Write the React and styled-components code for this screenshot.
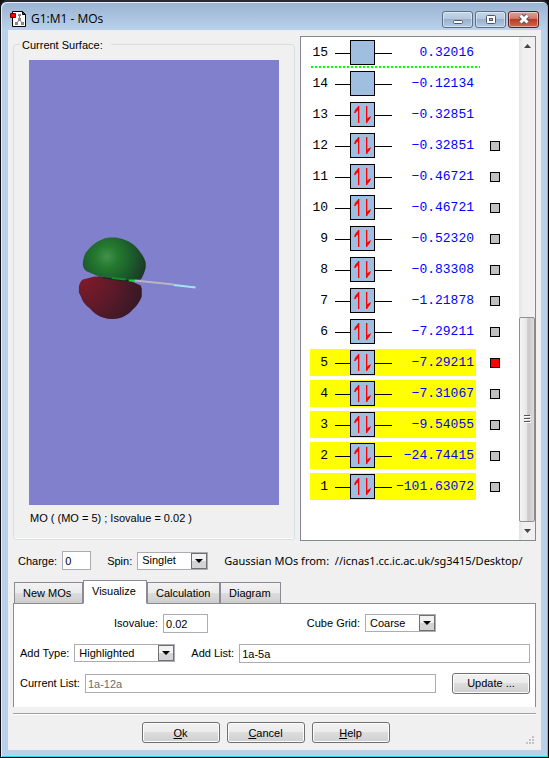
import React, { useState } from 'react'
import styled, { createGlobalStyle } from 'styled-components'

const GlobalStyle = createGlobalStyle`
  * {
    box-sizing: border-box;
  }

  body {
    margin: 0;
    background-color: #101014;
    color: #000;
    font-family: 'Liberation Sans', Arial, sans-serif;
    font-size: 11px;
    line-height: 14px;
  }

  input,
  select,
  button {
    margin: 0;
    font: inherit;
    color: inherit;
  }
`

const Frame = styled.div`
  display: flex;
  flex-direction: column;
  min-height: 100vh;
  padding: 0 6px 7px;
  border: solid;
  border-width: 2px 1px 1px;
  border-color: #2a2a32 #000 #000 #101014;
  border-radius: 7px 7px 0 0;
  background: linear-gradient(#9ab3d1, #b9d1ea 28px);
  box-shadow: inset 1px 1px 0 #e4eefa, inset -1px -1px 0 #2cd8ec;
`

const TitleBar = styled.header`
  display: flex;
  align-items: center;
  height: 28px;
  padding: 6px 3px 0;
  gap: 5px;
`

const Title = styled.h1`
  flex: 1;
  margin: 0;
  font-family: 'Open Sans', 'Noto Sans', sans-serif;
  font-size: 12px;
  font-weight: 400;
  line-height: 16px;
`

const WindowButtons = styled.div`
  display: flex;
  gap: 2px;
`

const WindowButton = styled.button`
  display: flex;
  align-items: center;
  justify-content: center;
  width: 31px;
  height: 17px;
  padding: 0;
  border: 1px solid ${p => (p.$close ? '#5a1f22' : '#5c6f86')};
  border-radius: 3px;
  background: ${p =>
    p.$close
      ? 'linear-gradient(#dfa397, #cf7766 45%, #b83a27 50%, #cf6a50)'
      : 'linear-gradient(#c5d6e8, #b4c8df 45%, #98b1cd 50%, #b2cae3)'};
  box-shadow: inset 0 0 0 1px rgba(255, 255, 255, 0.45);
`

const Client = styled.main`
  display: flex;
  flex: 1;
  flex-direction: column;
  margin: 0 1px;
  padding: 6px 5px;
  background-color: #f0f0f0;
`

const Top = styled.div`
  display: grid;
  flex: 1;
  grid-template-columns: minmax(0, 282fr) minmax(0, 236fr);
  gap: 5px;
`

const SurfaceBox = styled.fieldset`
  display: flex;
  flex-direction: column;
  min-width: 0;
  margin: 0 0 1px;
  padding: 8px 15px 14px;
  border: 1px solid #d5dfe5;
  border-radius: 3px;
  box-shadow: inset 0 -1px 0 #fff;
`

const Legend = styled.legend`
  margin-left: -9px;
  padding: 2px 8px 0 2px;
`

const Surface = styled.svg`
  flex: 1 1 0;
  width: 100%;
  height: 0;
  min-height: 0;
  background-color: #8080cc;
`

const Caption = styled.p`
  margin: 6px 0 0 1px;
`

const OrbitalPane = styled.div`
  display: flex;
  border: 1px solid #828790;
  background-color: #fff;
`

const OrbitalList = styled.ul`
  flex: 1;
  margin: 0;
  padding: 2px 0 30px 9px;
  list-style: none;
`

const OrbitalRow = styled.li`
  display: flex;
  align-items: center;
  gap: 14px;
  margin-bottom: 4px;
`

const Level = styled.label`
  display: flex;
  align-items: center;
  width: 166px;
  height: 27px;
  padding-right: 2px;
  background-color: ${p => (p.$highlighted ? '#ff0' : 'transparent')};
  font-family: 'Liberation Mono', monospace;
  font-size: 13px;
`

const Index = styled.span`
  width: 18px;
  margin-right: 7px;
  text-align: right;
`

const Energy = styled.span`
  flex: 1;
  color: #00f;
  text-align: right;
`

const SurfaceCheck = styled.input`
  appearance: none;
  width: 10px;
  height: 10px;
  border: 1px solid #000;
  background-color: #c0c0c0;

  &:checked {
    background-color: #f00;
  }
`

const FermiLine = styled.li`
  width: 169px;
  height: 2px;
  margin: -4px 0 2px 1px;
  background: repeating-linear-gradient(90deg, #0f0 0 2px, #fff 2px 4px);
`

const ScrollBar = styled.div`
  display: flex;
  flex-direction: column;
  width: 16px;
  background: linear-gradient(90deg, #e3e3e3, #f0f0f0 4px);
`

const ScrollButton = styled.button`
  display: flex;
  align-items: center;
  justify-content: center;
  height: 18px;
  padding: 0;
  border: 0;
  background: none;
`

const ScrollSpace = styled.div`
  flex: 263;
`

const Thumb = styled.div`
  display: flex;
  flex: 204;
  align-items: center;
  justify-content: center;
  border: 1px solid #8f8f8f;
  border-radius: 2px;
  background: linear-gradient(90deg, #f5f5f5, #e6e6e6 50%, #c8c8ca 55%, #dadada);
`

const Settings = styled.div`
  display: flex;
  align-items: center;
  margin-top: 10px;
  padding: 0 6px 0 5px;
  gap: 16px;
`

const Field = styled.label`
  display: flex;
  flex: ${p => (p.$grow ? 1 : 'none')};
  align-items: center;
  gap: 5px;
  min-width: 0;
  white-space: nowrap;
`

const TextBox = styled.input`
  flex: ${p => (p.$width ? 'none' : 1)};
  width: ${p => (p.$width ? `${p.$width}px` : 'auto')};
  min-width: 0;
  height: 19px;
  padding: 1px 2px 0;
  border: 1px solid #abadb3;
  background-color: #fff;

  &:disabled {
    color: #6d6d6d;
  }
`

const SelectWrap = styled.span`
  position: relative;
  display: flex;
  width: ${p => p.$width}px;
`

const StyledSelect = styled.select`
  appearance: none;
  width: 100%;
  height: 18px;
  padding: 0 18px 1px 4px;
  border: 1px solid #abadb3;
  border-radius: 0;
  background-color: #fff;
`

const SelectArrow = styled.span`
  position: absolute;
  top: 1px;
  right: 1px;
  display: flex;
  align-items: center;
  justify-content: center;
  width: 16px;
  height: 16px;
  border: 1px solid #707070;
  background: linear-gradient(#f2f2f2 50%, #d4d4d4 50%);
  pointer-events: none;
`

const SourcePath = styled.span`
  flex: 1;
  min-width: 0;
  overflow: hidden;
  font-family: 'Noto Sans', sans-serif;
  white-space: pre;
`

const Tabs = styled.div`
  display: flex;
  align-items: flex-end;
  height: 24px;
  margin: 10px 0 -1px 1px;
`

const Tab = styled.button`
  position: relative;
  width: ${p => p.$width}px;
  height: ${p => (p.$active ? 24 : 22)}px;
  padding: 0 0 ${p => (p.$active ? 2 : 1)}px 8px;
  border: 1px solid #898c95;
  border-bottom-color: ${p => (p.$active ? '#fff' : '#898c95')};
  background: ${p =>
    p.$active ? '#fff' : 'linear-gradient(#f2f2f2, #ebebeb 50%, #ddd 50%, #cdcdcd)'};
  text-align: left;
`

const Panel = styled.section`
  display: flex;
  flex-direction: column;
  gap: 10px;
  padding: 9px 5px 14px;
  border: solid #898c95;
  border-width: 1px 1px 0;
  background-color: #fff;
`

const PanelRow = styled.div`
  display: flex;
  align-items: center;
  justify-content: ${p => (p.$split ? 'space-between' : 'flex-start')};
  gap: 16px;
  height: 20px;
  padding: ${p => (p.$split ? '0 94px 0 95px' : '0 0 0 1px')};
`

const PushButton = styled.button`
  width: 78px;
  height: 21px;
  padding: 0;
  border: 1px solid #707070;
  border-radius: 3px;
  background: linear-gradient(#f2f2f2, #ebebeb 50%, #ddd 50%, #cfcfcf);
  box-shadow: inset 0 0 0 1px #fcfcfc;
`

const Footer = styled.footer`
  position: relative;
  display: flex;
  justify-content: center;
  gap: 7px;
  margin-top: 6px;
  padding: 8px 18px 1px 0;
  border-top: 1px solid #a0a0a0;
  box-shadow: inset 0 1px 0 #fff;
`

const SizeGrip = styled.svg`
  position: absolute;
  right: 2px;
  bottom: 0;
`

const orbitals = [
  { n: 15, energy: '0.32016', empty: true },
  { n: 14, energy: '−0.12134', empty: true },
  { n: 13, energy: '−0.32851' },
  { n: 12, energy: '−0.32851', box: true },
  { n: 11, energy: '−0.46721', box: true },
  { n: 10, energy: '−0.46721', box: true },
  { n: 9, energy: '−0.52320', box: true },
  { n: 8, energy: '−0.83308', box: true },
  { n: 7, energy: '−1.21878', box: true },
  { n: 6, energy: '−7.29211', box: true },
  { n: 5, energy: '−7.29211', box: true, highlighted: true, current: true },
  { n: 4, energy: '−7.31067', box: true, highlighted: true },
  { n: 3, energy: '−9.54055', box: true, highlighted: true },
  { n: 2, energy: '−24.74415', box: true, highlighted: true },
  { n: 1, energy: '−101.63072', box: true, highlighted: true },
]

const tabs = [
  { name: 'New MOs', width: 69 },
  { name: 'Visualize', width: 64 },
  { name: 'Calculation', width: 73 },
  { name: 'Diagram', width: 61 },
]

const AppIcon = () => (
  <svg width="16" height="16" viewBox="0 0 16 16" aria-hidden="true">
    <path d="M2.5 .5h10l3 3v12h-13z" fill="#fff" stroke="#000" />
    <path d="M12.5 .5v3h3z" fill="#f00" stroke="#000" />
    <path d="M9.500 4v5M9.500 9l-3 3M9.500 9l3 3" stroke="#777" fill="none" />
    <path d="M8 3h3v2H8zM8 7h3v3H8zM5 11h3v3H5zM11 11h3v3h-3z" fill="#888" />
    <path d="M.5 2.5h5v4h-5z" fill="#f00" stroke="#600" />
  </svg>
)

const Spins = ({ empty }) => (
  <svg width="57" height="25" viewBox="0 0 57 25" aria-hidden="true">
    <path d="M0 13.5h15M40 13.5h17" stroke="#000" />
    <rect x="15.5" y=".5" width="24" height="24" fill="#a0bfe0" stroke="#000" />
    {!empty && (
      <g fill="#f00">
        <path d="M23 4h1.300v17h-1.300z" />
        <path d="M23.500 4v4l-2 1.500-1 1.500-1.500 0 1-3z" />
        <path d="M31 4h1.300v17h-1.300z" />
        <path d="M31.500 21v-4l2-1.500 2.500-1.500-1 3z" />
      </g>
    )}
  </svg>
)

const MoSurface = () => (
  <Surface viewBox="0 0 250 446" preserveAspectRatio="xMinYMin meet" role="img" aria-label="MO surface">
    <defs>
      <radialGradient id="green" gradientUnits="userSpaceOnUse" cx="78" cy="197" r="44">
        <stop offset="0" stopColor="#44904c" />
        <stop offset=".25" stopColor="#257a2f" />
        <stop offset=".6" stopColor="#1b5a2a" />
        <stop offset="1" stopColor="#1b3028" />
      </radialGradient>
      <radialGradient id="red" gradientUnits="userSpaceOnUse" cx="56" cy="221" r="60">
        <stop offset="0" stopColor="#7e1a29" />
        <stop offset=".5" stopColor="#5c1a29" />
        <stop offset="1" stopColor="#341825" />
      </radialGradient>
    </defs>
    <path
      d="M54 220L66 217L101 221L112 226L113 229V237Q110 245 104 250Q100 255 93 258Q83 261 74 258Q67 256 61 249Q54 244 52 237L50 233V227Q51 222 54 220z"
      fill="url(#red)"
    />
    <path
      d="M81 178H87Q94 179 100 182Q107 186 111 192Q116 198 117 203V208Q115 216 112 220L99 221L83 219L68 216L58 212Q54 209 54 205V202Q55 196 57 193Q64 184 71 181Q76 178 81 178z"
      fill="url(#green)"
    />
    <path d="M66 216L84 219L103 221L96 222L76 219z" fill="#17251b" />
    <path d="M83 218.500L97 220" stroke="#178b2c" strokeWidth="2" />
    <path d="M100 221h6" stroke="#00e620" strokeWidth="2" />
    <path d="M106 221L145 225" stroke="#b9b4c4" strokeWidth="2" />
    <path d="M145 225.500L167 228" stroke="#a0e5ef" strokeWidth="2" />
  </Surface>
)

const Select = ({ width, value }) => (
  <SelectWrap $width={width}>
    <StyledSelect defaultValue={value}>
      <option>{value}</option>
    </StyledSelect>
    <SelectArrow>
      <svg width="8" height="4" viewBox="0 0 8 4" aria-hidden="true">
        <path d="M0 0h8L4 4z" />
      </svg>
    </SelectArrow>
  </SelectWrap>
)

const App = () => {
  const [active, setActive] = useState('Visualize')

  return (
    <>
      <GlobalStyle />
      <Frame>
        <TitleBar>
          <AppIcon />
          <Title>G1:M1 - MOs</Title>
          <WindowButtons>
            <WindowButton aria-label="Minimize">
              <svg width="12" height="12">
                <rect x="1.5" y="7.500" width="9" height="3" rx="1" fill="#fff" stroke="#535666" />
              </svg>
            </WindowButton>
            <WindowButton aria-label="Maximize">
              <svg width="12" height="12">
                <rect x="1.5" y="2.500" width="9" height="8" rx="1" fill="#fff" stroke="#535666" />
                <rect x="4.500" y="5.500" width="3" height="2" fill="#a9bdd5" stroke="#535666" />
              </svg>
            </WindowButton>
            <WindowButton $close aria-label="Close">
              <svg width="12" height="12">
                <path d="M2.500 2.500L9.500 9.500M9.500 2.500L2.500 9.500" stroke="#535666" strokeWidth="5" />
                <path d="M2.500 2.500L9.500 9.500M9.500 2.500L2.500 9.500" stroke="#fff" strokeWidth="3" />
              </svg>
            </WindowButton>
          </WindowButtons>
        </TitleBar>

        <Client>
          <Top>
            <SurfaceBox>
              <Legend>Current Surface:</Legend>
              <MoSurface />
              <Caption>MO ( (MO = 5) ; Isovalue = 0.02 )</Caption>
            </SurfaceBox>

            <OrbitalPane>
              <OrbitalList>
                {orbitals.map(o => (
                  <React.Fragment key={o.n}>
                    <OrbitalRow>
                      <Level $highlighted={o.highlighted} htmlFor={o.box ? `mo-${o.n}` : undefined}>
                        <Index>{o.n}</Index>
                        <Spins empty={o.empty} />
                        <Energy>{o.energy}</Energy>
                      </Level>
                      {o.box && (
                        <SurfaceCheck type="checkbox" id={`mo-${o.n}`} defaultChecked={o.current} />
                      )}
                    </OrbitalRow>
                    {o.n === 15 && <FermiLine aria-hidden="true" />}
                  </React.Fragment>
                ))}
              </OrbitalList>
              <ScrollBar>
                <ScrollButton aria-label="Scroll up">
                  <svg width="7" height="4">
                    <path d="M0 4h7L3.500 0z" fill="#444" />
                  </svg>
                </ScrollButton>
                <ScrollSpace />
                <Thumb>
                  <svg width="7" height="8">
                    <path d="M0 .5h6M0 3.500h6M0 6.500h6" stroke="#555" />
                    <path d="M1 1.500h6M1 4.500h6M1 7.500h6" stroke="#fff" />
                  </svg>
                </Thumb>
                <ScrollButton aria-label="Scroll down">
                  <svg width="7" height="4">
                    <path d="M0 0h7L3.500 4z" fill="#444" />
                  </svg>
                </ScrollButton>
              </ScrollBar>
            </OrbitalPane>
          </Top>

          <Settings>
            <Field>
              Charge:
              <TextBox $width={29} defaultValue="0" />
            </Field>
            <Field>
              Spin:
              <Select width={71} value="Singlet" />
            </Field>
            <SourcePath>Gaussian MOs from:  //icnas1.cc.ic.ac.uk/sg3415/Desktop/</SourcePath>
          </Settings>

          <Tabs role="tablist">
            {tabs.map(t => (
              <Tab
                key={t.name}
                role="tab"
                aria-selected={t.name === active}
                $active={t.name === active}
                $width={t.width}
                onClick={() => setActive(t.name)}
              >
                {t.name}
              </Tab>
            ))}
          </Tabs>
          <Panel>
            <PanelRow $split>
              <Field>
                Isovalue:
                <TextBox $width={45} defaultValue="0.02" />
              </Field>
              <Field>
                Cube Grid:
                <Select width={71} value="Coarse" />
              </Field>
            </PanelRow>
            <PanelRow>
              <Field>
                Add Type:
                <Select width={101} value="Highlighted" />
              </Field>
              <Field $grow>
                Add List:
                <TextBox defaultValue="1a-5a" />
              </Field>
            </PanelRow>
            <PanelRow>
              <Field $grow>
                Current List:
                <TextBox defaultValue="1a-12a" disabled />
              </Field>
              <PushButton>Update ...</PushButton>
            </PanelRow>
          </Panel>

          <Footer>
            <PushButton>
              <u>O</u>k
            </PushButton>
            <PushButton>
              <u>C</u>ancel
            </PushButton>
            <PushButton>
              <u>H</u>elp
            </PushButton>
            <SizeGrip width="8" height="8" aria-hidden="true">
              <path d="M6 0h2v2H6zM3 3h2v2H3zM6 3h2v2H6zM0 6h2v2H0zM3 6h2v2H3zM6 6h2v2H6z" fill="#c4c4c4" />
            </SizeGrip>
          </Footer>
        </Client>
      </Frame>
    </>
  )
}

export default App
